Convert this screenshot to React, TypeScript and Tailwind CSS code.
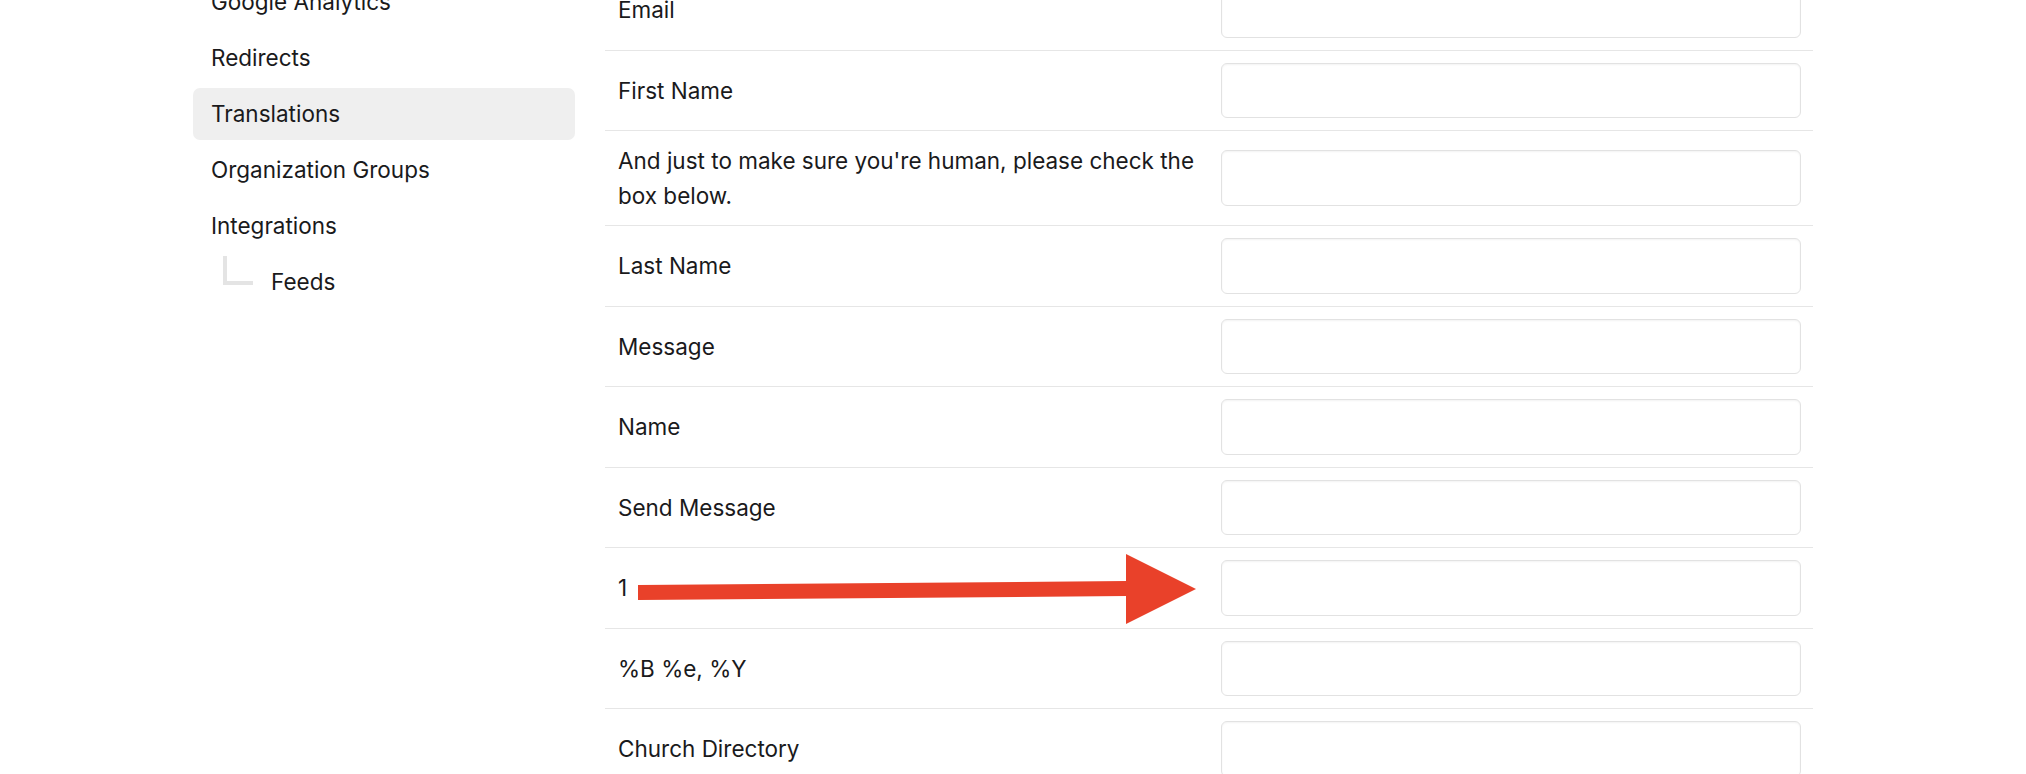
import React from 'react';

const navItems = [
  { label: 'Google Analytics' },
  { label: 'Redirects' },
  { label: 'Translations', active: true },
  { label: 'Organization Groups' },
  { label: 'Integrations' },
];

const rows = [
  'Email',
  'First Name',
  "And just to make sure you're human, please check the box below.",
  'Last Name',
  'Message',
  'Name',
  'Send Message',
  '1',
  '%B %e, %Y',
  'Church Directory',
  'Directory',
];

const Sidebar: React.FC = () => (
  <nav className="w-[382px] shrink-0 -mt-[24px] flex flex-col gap-[4px]">
    {navItems.map((item) => (
      <div
        key={item.label}
        className={`h-[52px] flex items-center px-[18px] rounded-[7px] ${item.active ? 'bg-[#efefef]' : ''}`}
      >
        {item.label}
      </div>
    ))}
    {/* Child item */}
    <div className="h-[52px] flex items-center pl-[30px]">
      <div className="self-start w-[30px] h-[29px] border-l-[4px] border-b-[4px] border-[#e4e4e4]" />
      <span className="ml-[18px]">Feeds</span>
    </div>
  </nav>
);

const TranslationRow: React.FC<{ label: string }> = ({ label }) => (
  <div className="grid grid-cols-2 items-center border-b border-[#e6e6e6] py-[12px]">
    <div className="px-[13px] leading-[35px]">{label}</div>
    <div className="px-[12px]">
      <input
        type="text"
        className="block w-full h-[55.5px] rounded-[6px] border border-[#e2e2e2] bg-white shadow-[inset_0_1px_2px_rgba(0,0,0,0.05)] outline-none"
      />
    </div>
  </div>
);

export default function App() {
  return (
    <div className="relative h-[774px] overflow-hidden bg-white text-[#1a1a1c] text-[22.5px] font-['Inter',sans-serif]">
      <div className="flex pl-[193px] gap-[30px]">
        <Sidebar />
        <main className="w-[1208px] -mt-[30px]">
          {rows.map((r) => (
            <TranslationRow key={r} label={r} />
          ))}
        </main>
      </div>

      {/* annotation arrow */}
      <svg
        className="absolute left-0 top-0 pointer-events-none"
        width="2026"
        height="774"
        viewBox="0 0 2026 774"
      >
        <polygon points="638,585 1127,581 1127,596 638,600" fill="#e9412a" />
        <polygon points="1126,554 1196,589 1126,624" fill="#e9412a" />
      </svg>
    </div>
  );
}
